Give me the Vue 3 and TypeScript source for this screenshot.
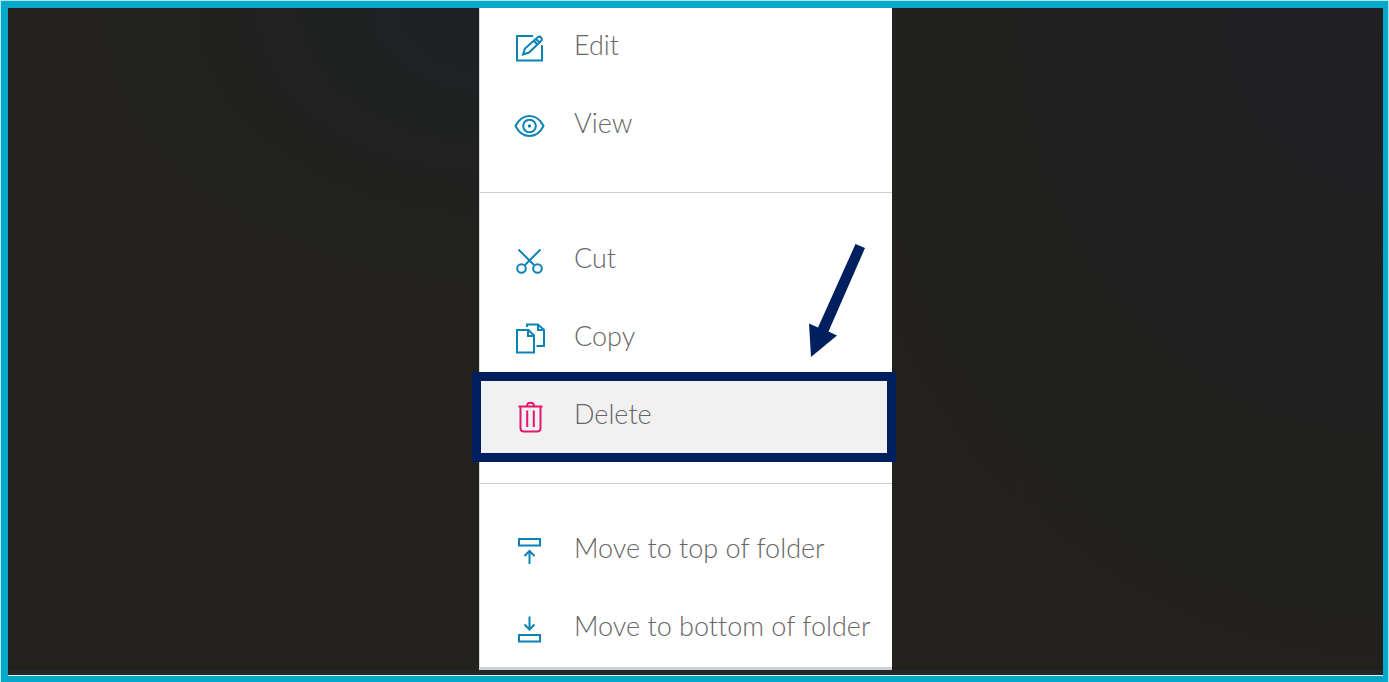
<script setup lang="ts">
type IconName = 'edit' | 'view' | 'cut' | 'copy' | 'delete' | 'top' | 'bottom'

interface MenuItem {
  icon: IconName
  label: string
  marked?: boolean
}

const groups: MenuItem[][] = [
  [
    { icon: 'edit', label: 'Edit' },
    { icon: 'view', label: 'View' },
  ],
  [
    { icon: 'cut', label: 'Cut' },
    { icon: 'copy', label: 'Copy' },
    { icon: 'delete', label: 'Delete', marked: true },
  ],
  [
    { icon: 'top', label: 'Move to top of folder' },
    { icon: 'bottom', label: 'Move to bottom of folder' },
  ],
]
</script>

<template>
  <main class="frame">
    <div class="stage">
      <nav class="menu" aria-label="Item actions">
        <ul v-for="(group, index) in groups" :key="index" class="group">
          <li v-for="item in group" :key="item.icon" class="entry">
            <button type="button" class="item" :class="{ marked: item.marked }">
              <svg class="icon" :class="{ danger: item.icon === 'delete' }" viewBox="0 0 32 32" aria-hidden="true">
                <g v-if="item.icon === 'edit'">
                  <path d="M19 4H3V28.500H28V13" />
                  <path d="M9 22.500L11 16.500L24 5Q25.500 4 27 5.500Q28.500 7 27.500 8.500L15 20.500ZM22 7L25.500 10.500M20 9L23.500 12.500" />
                </g>
                <g v-else-if="item.icon === 'view'">
                  <path d="M1.500 16C5 9 10 6 15.500 6S26 9 29.500 16C26 23 21 26 15.500 26S5 23 1.500 16Z" />
                  <circle cx="15.500" cy="16" r="6.300" />
                  <circle class="dot" cx="15.500" cy="16" r="1.700" />
                </g>
                <g v-else-if="item.icon === 'cut'">
                  <path d="M4.500 4.500L20 20M26.500 4.500L11 20" />
                  <circle cx="7.500" cy="23.500" r="4.300" />
                  <circle cx="23.500" cy="23.500" r="4.300" />
                </g>
                <g v-else-if="item.icon === 'copy'">
                  <path d="M3 7H14.500L20 12.500V29.500H3ZM14 7V13H20" />
                  <path d="M13 4V1.500H24L30 7V23H22.500M24 1.500V7H30" />
                </g>
                <g v-else-if="item.icon === 'delete'">
                  <path d="M4.500 5.500H28.500M6.500 6V27Q6.500 30.500 10 30.500H23Q26.500 30.500 26.500 27V6M13 5C13 0.500 20 0.500 20 5M13.200 9.500V26M19.800 9.500V26" />
                </g>
                <g v-else-if="item.icon === 'top'">
                  <path d="M5 4H26V10.500H5ZM15.500 29V16M10.500 21L15.500 16L20.500 21" />
                </g>
                <g v-else>
                  <path d="M5 22H26V28.500H5ZM15.500 3.500V16.500M10.500 11.500L15.500 16.500L20.500 11.500" />
                </g>
              </svg>
              <span class="label">{{ item.label }}</span>
            </button>
          </li>
        </ul>
        <svg class="arrow" viewBox="0 0 58 116" aria-hidden="true">
          <path d="M47.500 1L57 5L20.500 88.500L29 92.500L3 114L1 80.500L10 84.500Z" />
        </svg>
      </nav>
    </div>
  </main>
</template>

<style>
body {
  margin: 0;
}
</style>

<style scoped>
.frame {
  box-sizing: border-box;
  min-height: 100vh;
  display: flex;
  padding: 1px 1px 0 1px;
  background: #a8ecf6;
}

.stage {
  flex: 1;
  display: flex;
  justify-content: center;
  align-items: flex-start;
  border: 7px solid #06a8ca;
  border-right-width: 5px;
  border-bottom-width: 6px;
  box-shadow: inset 0 -1px #d8f5f8, inset 0 -6px #252628;
  background:
    radial-gradient(ellipse 600px 700px at 100% 0, #202024, transparent),
    radial-gradient(ellipse 400px 280px at 35% 0, #1e2124, transparent),
    #22211d;
  padding-bottom: 6px;
}

.menu {
  position: relative;
  box-sizing: border-box;
  width: 413px;
  margin-right: 20px;
  border-left: 1px solid #d4dadb;
  border-bottom: 3px solid #cbd3d4;
  background: #fff;
}

.group {
  margin: 0;
  padding: 28px 0;
  list-style: none;
}

.group:first-child {
  padding-top: 0;
}

.group:last-of-type {
  padding: 27px 0 0;
}

.group + .group {
  border-top: 1px solid #c8d0d1;
}

.item {
  position: relative;
  box-sizing: border-box;
  display: flex;
  align-items: center;
  gap: 28px;
  width: 100%;
  height: 78px;
  padding: 2px 24px 0 34px;
  border: 0;
  background: transparent;
  color: #666;
  font: 300 27px/36px Lato, "Liberation Sans", sans-serif;
  font-variant-ligatures: none;
  text-align: left;
  white-space: nowrap;
  cursor: pointer;
}

.label {
  padding-bottom: 6px;
}

.marked {
  background: #f1f1f1;
}

.marked::after {
  content: "";
  position: absolute;
  inset: -5px -4px -7px -8px;
  border: 9px solid #001f5f;
  pointer-events: none;
}

.icon {
  flex: none;
  width: 32px;
  height: 32px;
  fill: none;
  stroke: #0c83b5;
  stroke-width: 2;
}

.danger {
  stroke: #e21872;
}

.dot {
  fill: #0c83b5;
  stroke: none;
}

.arrow {
  position: absolute;
  top: 235px;
  right: 26px;
  width: 58px;
  height: 116px;
  fill: #001f5f;
  pointer-events: none;
}
</style>
